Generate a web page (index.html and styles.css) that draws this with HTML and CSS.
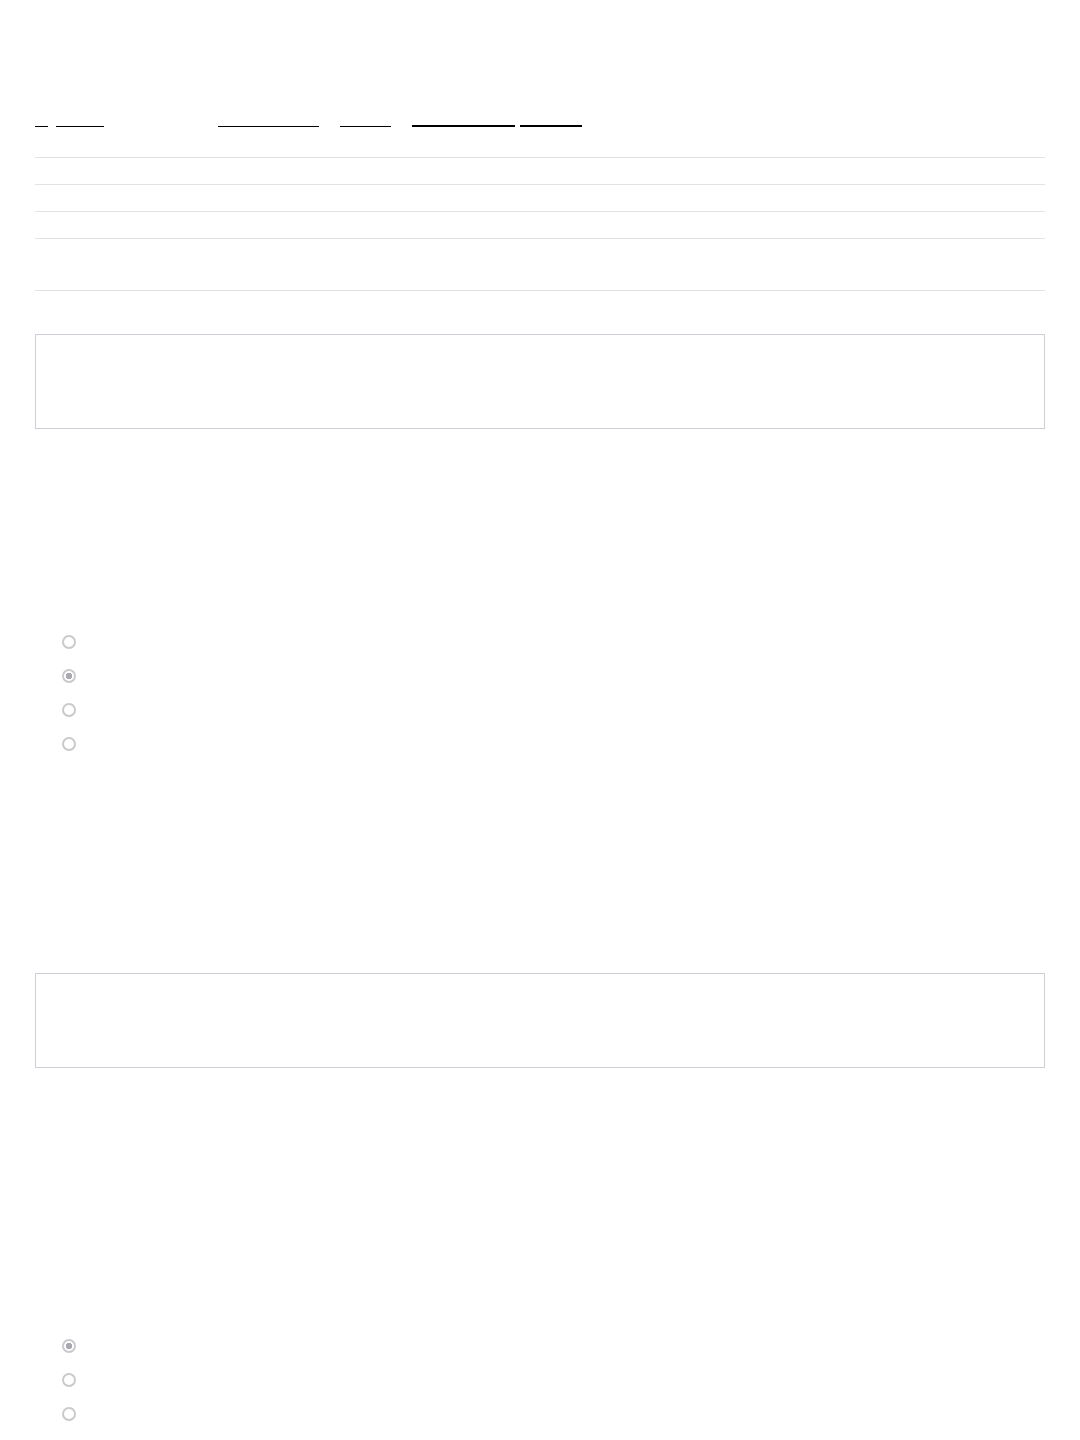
FILE: index.html
```html
<!DOCTYPE html>
<html lang="en">
<head>
    <meta charset="UTF-8">
    <meta name="viewport" content="width=device-width, initial-scale=1.0">
    <title>Form</title>
    <link rel="stylesheet" href="styles.css">
</head>
<body>
    <div class="page">
        <nav class="crumbs">
            <a class="crumb c1" href="#"></a>
            <a class="crumb c2" href="#"></a>
            <a class="crumb c3" href="#"></a>
            <a class="crumb c4" href="#"></a>
            <a class="crumb c5 strong" href="#"></a>
            <a class="crumb c6 strong" href="#"></a>
        </nav>

        <div class="rows">
            <div class="row"></div>
            <div class="row"></div>
            <div class="row"></div>
            <div class="row tall"></div>
        </div>

        <div class="box box-first"></div>

        <div class="choices choices-first">
            <label class="choice"><input type="radio" name="q1" disabled></label>
            <label class="choice"><input type="radio" name="q1" checked disabled></label>
            <label class="choice"><input type="radio" name="q1" disabled></label>
            <label class="choice"><input type="radio" name="q1" disabled></label>
        </div>

        <div class="box box-second"></div>

        <div class="choices choices-second">
            <label class="choice"><input type="radio" name="q2" checked disabled></label>
            <label class="choice"><input type="radio" name="q2" disabled></label>
            <label class="choice"><input type="radio" name="q2" disabled></label>
        </div>
    </div>
</body>
</html>
```

FILE: styles.css
```css
body {
    font-family: 'Liberation Sans', Arial, sans-serif;
    background: #fff;
    color: #fff;
    margin: 0;
}

.page {
    padding: 0 35px;
}

.crumbs {
    height: 127px;
    display: flex;
    align-items: flex-end;
}

.crumb {
    display: block;
    height: 0;
    border-bottom: 1px solid #000;
}

.crumb.strong {
    border-bottom-width: 2px;
}

.c1 { width: 13px; }
.c2 { width: 48px; margin-left: 8px; }
.c3 { width: 101px; margin-left: 114px; }
.c4 { width: 51px; margin-left: 21px; }
.c5 { width: 103px; margin-left: 21px; }
.c6 { width: 62px; margin-left: 5px; }

.rows {
    margin-top: 30px;
    border-bottom: 1px solid #e2e2e6;
}

.row {
    height: 26px;
    border-top: 1px solid #e2e2e6;
}

.row.tall {
    height: 51px;
}

.box {
    height: 93px;
    border: 1px solid #ccd0d6;
}

.box-first {
    margin-top: 43px;
}

.box-second {
    margin-top: 212px;
}

.choices {
    display: flex;
    flex-direction: column;
    padding-left: 27px;
}

.choices-first {
    margin-top: 196px;
}

.choices-second {
    margin-top: 261px;
}

.choice {
    height: 34px;
    display: flex;
    align-items: center;
}

.choice input {
    appearance: none;
    -webkit-appearance: none;
    margin: 0;
    width: 14px;
    height: 14px;
    box-sizing: border-box;
    border: 2px solid #cacace;
    border-radius: 50%;
    background: #fff;
}

.choice input:checked {
    background: radial-gradient(circle, #a9a9b3 0 3px, #fff 3.5px);
}
```
